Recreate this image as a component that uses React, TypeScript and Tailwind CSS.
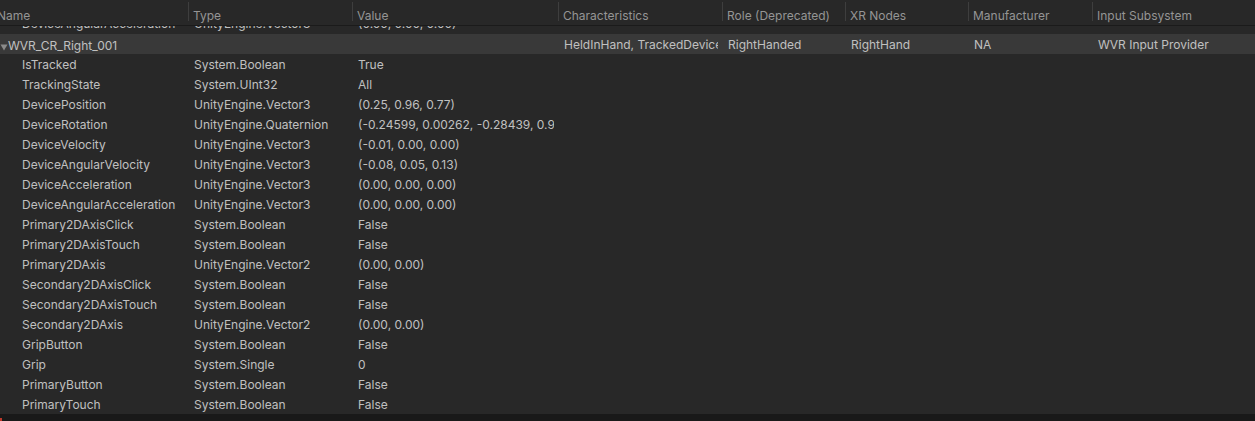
import React from "react"

const cols = "grid grid-cols-[188px_164px_206px_164px_123px_123px_124px_1fr]"

const headers = ["Type", "Value", "Characteristics", "Role (Deprecated)", "XR Nodes", "Manufacturer", "Input Subsystem"]

const rows: [string, string, string][] = [
  ["IsTracked", "System.Boolean", "True"],
  ["TrackingState", "System.UInt32", "All"],
  ["DevicePosition", "UnityEngine.Vector3", "(0.25, 0.96, 0.77)"],
  ["DeviceRotation", "UnityEngine.Quaternion", "(-0.24599, 0.00262, -0.28439, 0.92663)"],
  ["DeviceVelocity", "UnityEngine.Vector3", "(-0.01, 0.00, 0.00)"],
  ["DeviceAngularVelocity", "UnityEngine.Vector3", "(-0.08, 0.05, 0.13)"],
  ["DeviceAcceleration", "UnityEngine.Vector3", "(0.00, 0.00, 0.00)"],
  ["DeviceAngularAcceleration", "UnityEngine.Vector3", "(0.00, 0.00, 0.00)"],
  ["Primary2DAxisClick", "System.Boolean", "False"],
  ["Primary2DAxisTouch", "System.Boolean", "False"],
  ["Primary2DAxis", "UnityEngine.Vector2", "(0.00, 0.00)"],
  ["Secondary2DAxisClick", "System.Boolean", "False"],
  ["Secondary2DAxisTouch", "System.Boolean", "False"],
  ["Secondary2DAxis", "UnityEngine.Vector2", "(0.00, 0.00)"],
  ["GripButton", "System.Boolean", "False"],
  ["Grip", "System.Single", "0"],
  ["PrimaryButton", "System.Boolean", "False"],
  ["PrimaryTouch", "System.Boolean", "False"],
]

// Unity clips cell text a few px before the column edge
function Cell({ children }: { children?: React.ReactNode }) {
  return (
    <div className="pl-[6px] pr-[4px] min-w-0">
      <div className="overflow-hidden whitespace-nowrap">{children}</div>
    </div>
  )
}

function ChildRow({ name, type, value }: { name: string; type: string; value: string }) {
  return (
    <div className={cols + " h-5 pt-[4px]"}>
      <div className="overflow-hidden whitespace-nowrap pl-[22px]">{name}</div>
      <Cell>{type}</Cell>
      <Cell>{value}</Cell>
    </div>
  )
}

export default function App() {
  return (
    <div
      className="w-[1255px] h-[421px] overflow-hidden bg-[#282828] text-[#c0c0c0] text-[12px] leading-[14px] flex flex-col"
      style={{ fontFamily: "Inter, 'Noto Sans', sans-serif" }}
    >
      {/* header */}
      <div className={cols + " h-[26px] shrink-0 border-b border-[#1b1b1b] text-[#959595]"}>
        <div className="flex items-center pt-[6px] -ml-[3px]">Name</div>
        {headers.map((h) => (
          <div key={h} className="flex items-center overflow-hidden whitespace-nowrap">
            <div className="w-px h-[19px] -mt-[3px] bg-[#3e3e3e] shrink-0" />
            <span className="pl-[4px] pt-[6px]">{h}</span>
          </div>
        ))}
      </div>

      {/* scrolled-off row, only the bottom shows */}
      <div className="h-[8px] shrink-0 overflow-hidden">
        <div className={cols + " h-5 pt-[4px] -mt-[13px]"}>
          <div className="overflow-hidden whitespace-nowrap pl-[22px]">DeviceAngularAcceleration</div>
          <Cell>UnityEngine.Vector3</Cell>
          <Cell>(0.00, 0.00, 0.00)</Cell>
        </div>
      </div>

      {/* device row */}
      <div className={cols + " h-5 shrink-0 pt-[4px] bg-[#393939]"}>
        <div className="flex items-center whitespace-nowrap">
          <svg width="8" height="8" viewBox="0 0 8 8" className="mt-[2px] shrink-0">
            <path d="M0.5 1.5 L7.5 1.5 L4 7.5 Z" fill="#8a8a8a" />
          </svg>
          <span>WVR_CR_Right_001</span>
        </div>
        <div />
        <div />
        <Cell>HeldInHand, TrackedDevice, Controller, Right</Cell>
        <Cell>RightHanded</Cell>
        <Cell>RightHand</Cell>
        <Cell>NA</Cell>
        <Cell>WVR Input Provider</Cell>
      </div>

      <div className="flex flex-col shrink-0">
        {rows.map(([n, t, v]) => (
          <ChildRow key={n} name={n} type={t} value={v} />
        ))}
      </div>

      <div className="flex-1 bg-[#191919] flex items-end">
        <div className="w-[2px] h-[3px] bg-[#c0392b]" />
      </div>
    </div>
  )
}
